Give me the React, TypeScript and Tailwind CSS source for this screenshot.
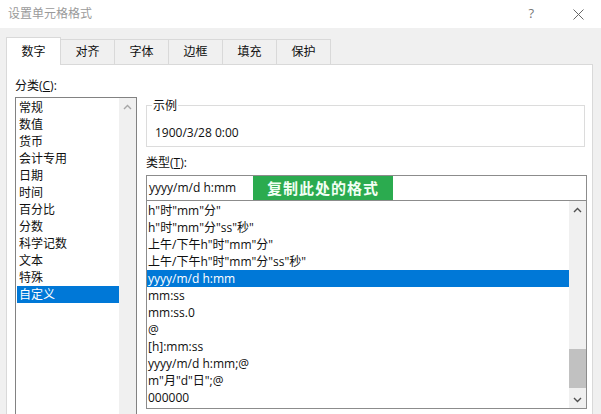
import React from 'react'

const categories = ['常规', '数值', '货币', '会计专用', '日期', '时间', '百分比', '分数', '科学记数', '文本', '特殊', '自定义']

const formats = [
  'h"时"mm"分"',
  'h"时"mm"分"ss"秒"',
  '上午/下午h"时"mm"分"',
  '上午/下午h"时"mm"分"ss"秒"',
  'yyyy/m/d h:mm',
  'mm:ss',
  'mm:ss.0',
  '@',
  '[h]:mm:ss',
  'yyyy/m/d h:mm;@',
  'm"月"d"日";@',
  '000000',
]

const tabs = ['数字', '对齐', '字体', '边框', '填充', '保护']

function Chevron({ up, color }: { up?: boolean; color: string }) {
  return (
    <svg width="9" height="6" viewBox="0 0 9 6" fill="none">
      <path d={up ? 'M1 5 L4.5 1.5 L8 5' : 'M1 1 L4.5 4.5 L8 1'} stroke={color} strokeWidth="1.4" />
    </svg>
  )
}

export default function App() {
  return (
    <div className="flex h-[414px] w-[601px] flex-col overflow-hidden bg-[#f0f0f0] font-['Open_Sans','Noto_Sans_CJK_SC',sans-serif] text-[12px] text-[#0f0f0f]">
      {/* title bar */}
      <div className="flex h-[28px] shrink-0 items-center bg-white pl-[8px] pr-[17px]">
        <span className="text-[#9a9a9a]">设置单元格格式</span>
        <span className="ml-auto mr-[39px] text-[13px] text-[#777]">?</span>
        <svg width="11" height="11" viewBox="0 0 11 11">
          <path d="M0.5 0.5 L10.5 10.5 M10.5 0.5 L0.5 10.5" stroke="#666" strokeWidth="1" />
        </svg>
      </div>

      {/* tabs */}
      <div className="flex shrink-0 items-end pl-[6px] pt-[9px]">
        {tabs.map((tab, i) =>
          i === 0 ? (
            <div key={tab} className="relative z-10 -mb-px flex h-[28px] w-[55px] items-center justify-center border border-b-0 border-[#d9d9d9] bg-white">
              {tab}
            </div>
          ) : (
            <div key={tab} className="flex h-[25px] w-[54px] items-center justify-center border-r border-t border-[#d9d9d9]">
              {tab}
            </div>
          ),
        )}
      </div>

      {/* panel */}
      <div className="ml-[6px] w-[587px] flex-1 border border-[#d9d9d9] bg-white pl-[8px] pt-[12px]">
        <div className="leading-[17px]">
          分类(<span className="underline">C</span>):
        </div>
        <div className="mt-[3px] flex gap-[9px]">
          {/* category list */}
          <div className="flex h-[330px] w-[122px] shrink-0 border border-[#828282]">
            <div className="flex-1 pl-[1px] pt-[1px]">
              {categories.map((c) => (
                <div key={c} className={`h-[17px] pl-[2px] leading-[17px] ${c === '自定义' ? 'bg-[#0078d7] text-white' : ''}`}>
                  {c}
                </div>
              ))}
            </div>
            <div className="flex w-[17px] flex-col bg-[#f0f0f0]">
              <div className="flex h-[17px] items-center justify-center">
                <Chevron up color="#a6a6a6" />
              </div>
            </div>
          </div>

          {/* right column */}
          <div className="w-[441px]">
            <fieldset className="w-[439px] border border-[#dcdcdc] pb-[5px] pl-[5px]">
              <legend className="px-[1px] leading-[17px]">示例</legend>
              <div className="mt-[10px] pl-[3px] leading-[17px]">1900/3/28 0:00</div>
            </fieldset>

            <div className="mt-[7px] leading-[17px]">
              类型(<span className="underline">T</span>):
            </div>

            <div className="mt-[4px] flex h-[25px] border-l border-r border-t border-[#8c8c8c]">
              <div className="w-[106px] pl-[2px] leading-[24px]">yyyy/m/d h:mm</div>
              <div className="flex w-[140px] items-center justify-center bg-[#2bab4f] text-[15px] font-bold tracking-[1px] text-[#f2fff4]">
                复制此处的格式
              </div>
            </div>

            <div className="flex h-[209px] border border-[#8c8c8c]">
              <div className="flex-1 pt-[1px]">
                {formats.map((f, i) => (
                  <div key={f} className={`h-[17px] pl-[1px] leading-[17px] ${i === 4 ? 'bg-[#0078d7] text-white' : ''}`}>
                    {f}
                  </div>
                ))}
              </div>
              <div className="flex w-[17px] flex-col bg-[#f0f0f0]">
                <div className="flex h-[17px] items-center justify-center">
                  <Chevron up color="#505050" />
                </div>
                <div className="flex flex-1 flex-col">
                  <div className="mb-[4px] mt-auto h-[39px] bg-[#c1c1c1]" />
                </div>
                <div className="flex h-[16px] items-center justify-center">
                  <Chevron color="#505050" />
                </div>
              </div>
            </div>
          </div>
        </div>
      </div>
    </div>
  )
}
